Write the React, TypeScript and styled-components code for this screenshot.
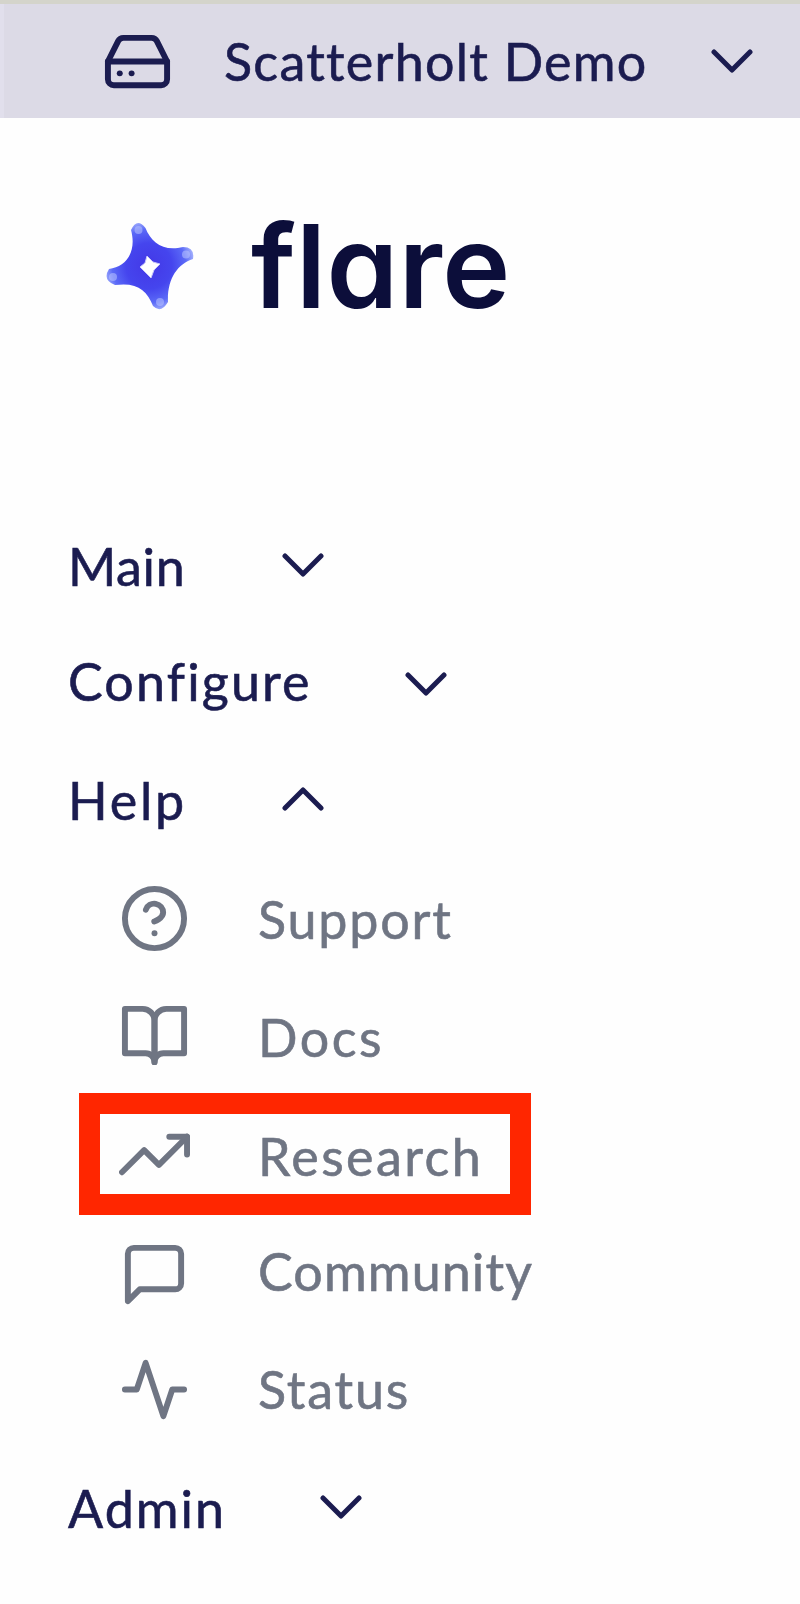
import React from "react";
import styled, { createGlobalStyle } from "styled-components";
import { FiActivity, FiBookOpen, FiHardDrive, FiHelpCircle, FiMessageSquare, FiTrendingUp } from "react-icons/fi";
import type { IconType } from "react-icons";

const navy = "#1b1c50";
const grey = "#6f7583";

const GlobalStyle = createGlobalStyle`
  * { box-sizing: border-box; }
  body { margin: 0; background: #fefefe; font-family: Lato, "Liberation Sans", sans-serif; }
`;

const Page = styled.div`
  width: 800px;
  height: 1604px;
  overflow: hidden;
  background: #fefefe;
`;

const TenantBar = styled.header`
  display: flex;
  align-items: center;
  height: 118px;
  padding: 4px 47px 0 102px;
  background: linear-gradient(#d4d4cb 0 4px, transparent 4px), linear-gradient(90deg, #e1dfec 0 4px, #dcdae6 4px);
  color: ${navy};
`;

const Label = styled.span<{ $spacing?: number; $nudge?: number }>`
  display: block;
  margin-top: ${(p) => 2 * (p.$nudge ?? 0)}px;
  font-size: 52px;
  line-height: 64px;
  white-space: nowrap;
  letter-spacing: ${(p) => p.$spacing ?? 0}px;
  -webkit-text-stroke: 0.6px currentColor;
`;

const TenantName = styled(Label)`
  flex: 1;
`;

const Brand = styled.div`
  display: flex;
  align-items: center;
  height: 140px;
  margin: 78px 0 0 104px;
`;

const BrandName = styled.span`
  margin-left: 57px;
  font-family: Inter, sans-serif;
  font-size: 115px;
  font-weight: 640;
  letter-spacing: 0.4px;
  font-feature-settings: "cv11" 1;
  color: #0c0e3a;
`;

const Nav = styled.nav`
  padding-top: 179px;
`;

const Row = styled.div<{ $gap?: number }>`
  display: flex;
  align-items: center;
  height: 100px;
  margin-top: ${(p) => p.$gap ?? 0}px;
`;

const SectionRow = styled(Row)`
  padding-left: 68px;
  color: ${navy};
`;

const SectionName = styled(Label)<{ $width: number }>`
  width: ${(p) => p.$width}px;
`;

const ItemRow = styled(Row)`
  padding-left: 119px;
  color: ${grey};
`;

const HighlightedRow = styled(Row)`
  width: 452px;
  height: 122px;
  margin-left: 79px;
  padding-left: 19px;
  border: 21px solid #ff2600;
  color: ${grey};
`;

const IconSlot = styled.span<{ $gap: number }>`
  display: flex;
  width: 71px;
  margin-right: ${(p) => p.$gap}px;
  svg { width: 71px; height: 71px; flex: none; }
`;

const ChevronSvg = styled.svg<{ $up?: boolean }>`
  display: block;
  flex: none;
  width: 42px;
  height: 26px;
  transform: ${(p) => (p.$up ? "scaleY(-1)" : "none")};
`;

function Chevron({ up }: { up?: boolean }) {
  return (
    <ChevronSvg viewBox="0 0 42 26" $up={up} fill="none" stroke={navy} strokeWidth="5" strokeLinecap="round" strokeLinejoin="round">
      <path d="M3 4 21 22 39 4" />
    </ChevronSvg>
  );
}

const tips = [[138.5, 230], [186, 254.5], [160, 302], [113, 277]];

function Star() {
  return (
    <svg width="90" height="90" viewBox="104 221 90 90" fill="none">
      <defs>
        <radialGradient id="starFill" gradientUnits="userSpaceOnUse" cx="149" cy="266" r="46">
          <stop offset="0" stopColor="#4338e6" />
          <stop offset="0.5" stopColor="#4545ee" />
          <stop offset="0.8" stopColor="#5b6af7" />
          <stop offset="1" stopColor="#a5b2fd" />
        </radialGradient>
      </defs>
      <path d="M131 230Q137 217 145.500 228C151 242 163 252 183 247Q195 247 193 259C177 264 167 280 168 302Q161 314 153 306C147 290 137 282 115 285Q102 280 109 269C126 267 137 252 131 230Z" fill="url(#starFill)" />
      {tips.map(([x, y]) => (
        <circle key={x} cx={x} cy={y} r="4" fill="#b9c4ff" fillOpacity="0.55" />
      ))}
      <path d="M147 256 153 262 160 264 154 270 151 278 145 272 140 267 145 263Z" fill="#fff" stroke="#c9c8fb" strokeWidth="1" />
    </svg>
  );
}

interface ItemProps {
  icon: IconType;
  name: string;
  spacing: number;
  nudge?: number;
}

function Item({ icon: Icon, name, spacing, nudge }: ItemProps) {
  return (
    <>
      <IconSlot $gap={68}><Icon /></IconSlot>
      <Label $spacing={spacing} $nudge={nudge}>{name}</Label>
    </>
  );
}

interface SectionProps {
  name: string;
  width: number;
  spacing: number;
  gap?: number;
  nudge?: number;
  open?: boolean;
}

function Section({ name, width, spacing, gap, nudge, open }: SectionProps) {
  return (
    <SectionRow $gap={gap}>
      <SectionName $width={width} $spacing={spacing} $nudge={nudge}>{name}</SectionName>
      <Chevron up={open} />
    </SectionRow>
  );
}

export default function App() {
  return (
    <Page>
      <GlobalStyle />
      <TenantBar>
        <IconSlot $gap={51}><FiHardDrive /></IconSlot>
        <TenantName $spacing={1.25}>Scatterholt Demo</TenantName>
        <Chevron />
      </TenantBar>
      <Brand>
        <Star />
        <BrandName>flare</BrandName>
      </Brand>
      <Nav>
        <Section name="Main" width={214} spacing={0.6} nudge={0.5} />
        <Section name="Configure" width={337} spacing={2.15} gap={19} nudge={-3} />
        <Section name="Help" width={214} spacing={2.8} gap={15} nudge={0.5} open />
        <ItemRow $gap={19}><Item icon={FiHelpCircle} name="Support" spacing={1.8} nudge={0.5} /></ItemRow>
        <ItemRow $gap={17}><Item icon={FiBookOpen} name="Docs" spacing={2.5} nudge={1.5} /></ItemRow>
        <HighlightedRow $gap={8}><Item icon={FiTrendingUp} name="Research" spacing={2.4} nudge={1.5} /></HighlightedRow>
        <ItemRow $gap={9}><Item icon={FiMessageSquare} name="Community" spacing={1.1} nudge={-3.5} /></ItemRow>
        <ItemRow $gap={15}><Item icon={FiActivity} name="Status" spacing={1.8} /></ItemRow>
        <Section name="Admin" width={252} spacing={2} gap={18} nudge={0.5} />
      </Nav>
    </Page>
  );
}
